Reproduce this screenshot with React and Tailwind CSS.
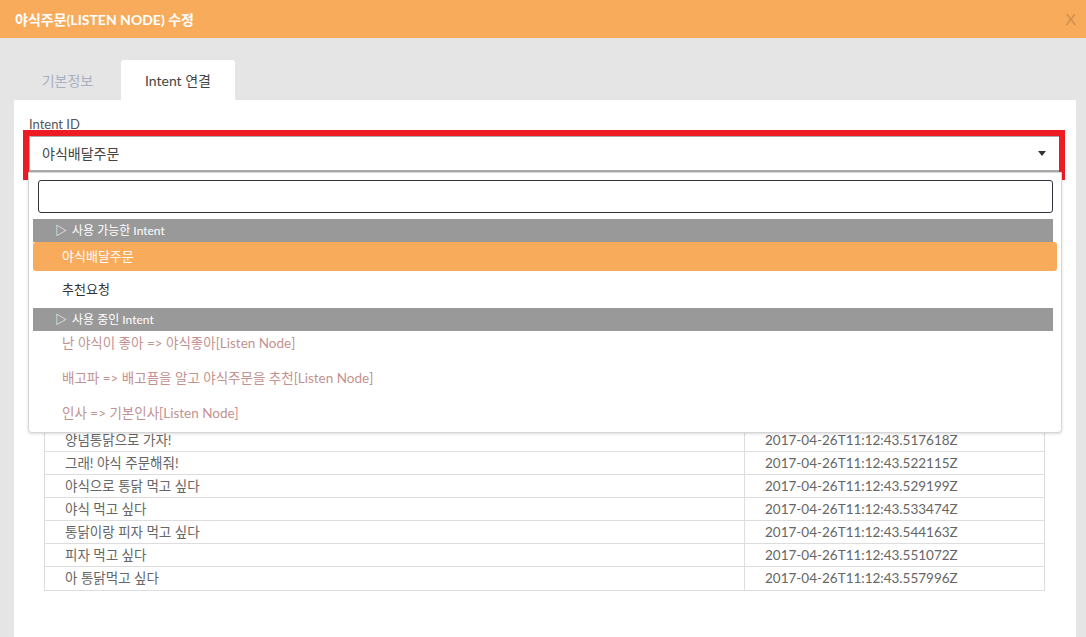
import React from "react";

const rows = [
  ["양념통닭으로 가자!", "2017-04-26T11:12:43.517618Z"],
  ["그래! 야식 주문해줘!", "2017-04-26T11:12:43.522115Z"],
  ["야식으로 통닭 먹고 싶다", "2017-04-26T11:12:43.529199Z"],
  ["야식 먹고 싶다", "2017-04-26T11:12:43.533474Z"],
  ["통닭이랑 피자 먹고 싶다", "2017-04-26T11:12:43.544163Z"],
  ["피자 먹고 싶다", "2017-04-26T11:12:43.551072Z"],
  ["아 통닭먹고 싶다", "2017-04-26T11:12:43.557996Z"],
];

const used = [
  "난 야식이 좋아 => 야식좋아[Listen Node]",
  "배고파 => 배고픔을 알고 야식주문을 추천[Listen Node]",
  "인사 => 기본인사[Listen Node]",
];

function GroupHeader({ children }) {
  return (
    <div className="h-[23px] bg-[#999999] text-white text-[12px] leading-[23px] pl-[22px] mr-[8px]">
      <span className="mr-[5px]">▷</span>
      {children}
    </div>
  );
}

export default function App() {
  return (
    <div
      className="w-[1086px] h-[637px] overflow-hidden bg-[#e5e5e5]"
      style={{ fontFamily: 'Lato, "Noto Sans CJK KR", sans-serif' }}
    >
      <div className="h-[38px] bg-[#f8ab5a] flex items-center justify-between pl-[15px] pr-[10px]">
        <span className="text-white text-[14px] font-bold">야식주문(LISTEN NODE) 수정</span>
        <span className="text-[#d4904a] text-[16px] leading-none">X</span>
      </div>

      <div className="pl-[14px] pr-[10px] pt-[22px]">
        <div className="flex h-[40px]">
          <div className="w-[107px] flex items-center justify-center text-[14px] text-[#a7b1c2]">기본정보</div>
          <div className="w-[114px] flex items-center justify-center text-[14px] text-[#444] bg-white rounded-t-[3px]">
            Intent 연결
          </div>
        </div>

        <div className="relative bg-white h-[537px] px-[15px] pt-[16px]">
          <div className="text-[13px] leading-[16px] text-[#555]">Intent ID</div>
          <div className="relative mt-[4px] h-[36px] border border-[#aaa] border-b-2 flex items-center justify-between pl-[12px] pr-[14px]">
            <span className="text-[14px] text-[#444]">야식배달주문</span>
            <span className="w-0 h-0 border-l-[4px] border-r-[4px] border-t-[5px] border-l-transparent border-r-transparent border-t-[#333]" />
          </div>

          <div className="mt-[257px] ml-[15px] mr-[16px] border border-t-0 border-[#dddddd] text-[13.5px] text-[#666]">
            {rows.map(([a, b], i) => (
              <div key={i} className="flex h-[23px] border-b border-[#dddddd] last:border-b-0 items-center">
                <div className="w-[700px] pl-[20px] border-r border-[#dddddd] h-full flex items-center">{a}</div>
                <div className="pl-[20px]">{b}</div>
              </div>
            ))}
          </div>

          {/* red annotation box */}
          <div className="absolute left-[9px] top-[30px] w-[1042px] h-[50px] border-[6px] border-[#ed1c24] pointer-events-none" />

          {/* dropdown */}
          <div className="absolute left-[14px] top-[72px] w-[1034px] h-[261px] bg-white border border-[#d6d6d6] rounded-b-[4px] shadow-[0_1px_3px_rgba(0,0,0,0.15)] pt-[7px] pl-[4px]">
            <div className="ml-[5px] mr-[8px] h-[33px] border border-[#2f353b] rounded-[3px]" />
            <div className="mt-[6px]">
              <GroupHeader>사용 가능한 Intent</GroupHeader>
              <div className="h-[29px] bg-[#f8ab5a] rounded-[3px] mr-[4px] text-white text-[13px] leading-[29px] pl-[29px]">
                야식배달주문
              </div>
              <div className="h-[37px] text-[13px] text-[#333] leading-[37px] pl-[29px]">추천요청</div>
              <GroupHeader>사용 중인 Intent</GroupHeader>
              {used.map((t) => (
                <div key={t} className="h-[35px] pt-[3px] text-[13.5px] leading-[18px] text-[#c39290] pl-[29px]">
                  {t}
                </div>
              ))}
            </div>
          </div>
        </div>
      </div>
    </div>
  );
}
